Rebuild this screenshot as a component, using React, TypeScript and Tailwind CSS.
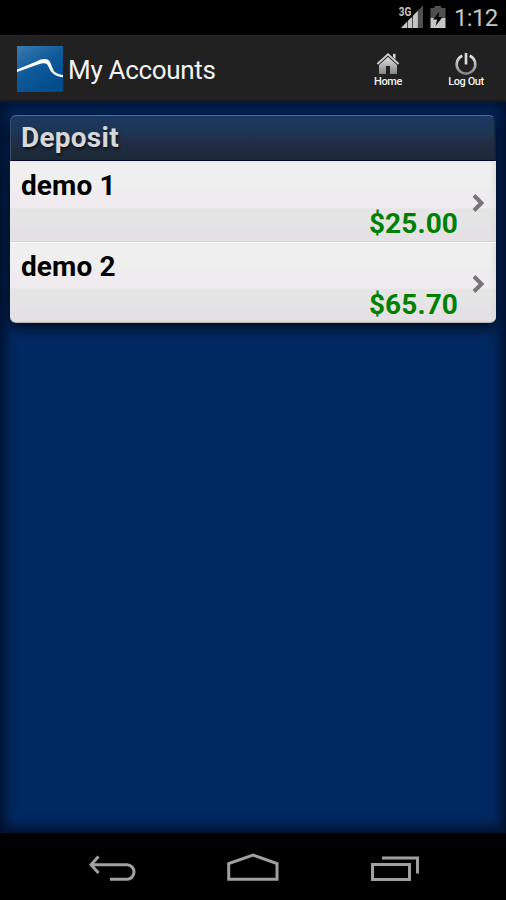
import type { ReactNode } from 'react';

interface Account {
  name: string;
  balance: string;
}

const accounts: Account[] = [
  { name: 'demo 1', balance: '$25.00' },
  { name: 'demo 2', balance: '$65.70' },
];

function StatusBar() {
  return (
    <div className="h-[35px] shrink-0 bg-black flex items-start justify-end pr-[9px]">
      <svg width="26" height="35" viewBox="0 0 26 35" className="mr-[6px]">
        <path d="M25 5.5V28H3z" fill="#505050" />
        <path d="M19.8 10.8V28H3z" fill="#c6c6c6" />
        <path d="M9.5 6V28M14.5 6V28" stroke="#000" strokeWidth="0.6" />
        <rect x="0" y="5" width="14.3" height="12.5" fill="#000" />
        <text x="0.7" y="16" fontFamily="Roboto" fontWeight="700" fontSize="12.8" fill="#c6c6c6" textLength="12.6" lengthAdjust="spacingAndGlyphs">
          3G
        </text>
      </svg>
      <svg width="16" height="35" viewBox="0 0 16 35" className="mr-[8px]">
        <path d="M4.5 6h6.5v2H15.5v10H.5V8h4z" fill="#505050" />
        <path d="M.5 18h15v10H.5z" fill="#c6c6c6" />
        <path d="M9.5 11.5L3 19.5h4.2L5.5 26 12.5 17H8.3z" fill="#000" />
      </svg>
      <span className="w-[43px] text-[24px] leading-[36px] tracking-[-0.7px] text-[#c6c6c6] whitespace-nowrap">1:12</span>
    </div>
  );
}

function Logo() {
  return (
    <svg width="46" height="46" viewBox="0 0 46 46" className="shrink-0 mt-[2px]">
      <defs>
        <linearGradient id="logoBg" x1="0" y1="0" x2="0.6" y2="1">
          <stop offset="0" stopColor="#3a7cb0" />
          <stop offset="0.5" stopColor="#0f5b9c" />
          <stop offset="1" stopColor="#004d8e" />
        </linearGradient>
      </defs>
      <rect width="46" height="46" fill="url(#logoBg)" />
      <path
        d="M0 23.4L20 15.2C25 12.7 30.5 12 32.7 15.5C35 19 35.5 24.5 38.5 26.6C41 28.3 43.5 28.8 46 29V31.2C42 31 38.2 29.7 35.5 27C32.2 24 31.5 19.5 29.5 17.8C28 16.7 25 17.2 21 18.5L0 26z"
        fill="#fff"
      />
    </svg>
  );
}

function ActionButton({ label, children }: { label: string; children: ReactNode }) {
  return (
    <button className="w-[78px] h-full flex flex-col items-center pt-[16px]">
      {children}
      <span className="mt-px text-[11px] leading-[12px] tracking-[-0.4px] font-medium text-[#f0f0f0] whitespace-nowrap">{label}</span>
    </button>
  );
}

function AppBar() {
  return (
    <header className="h-[67px] shrink-0 bg-[#212121] border-t border-[#262626] border-b-2 border-b-[#191919] flex items-center pl-[17px]">
      <Logo />
      <h1 className="ml-[5px] flex-1 text-[26px] leading-[30px] tracking-[-0.32px] pt-[4px] text-[#f3f3f3] whitespace-nowrap">My Accounts</h1>
      <ActionButton label="Home">
        <svg width="24" height="23" viewBox="0 0 24 23">
          <defs>
            <linearGradient id="metal" x1="0" y1="0" x2="0" y2="1">
              <stop offset="0" stopColor="#e2e2e2" />
              <stop offset="1" stopColor="#858585" />
            </linearGradient>
          </defs>
          <path d="M12 4.4L21 12V22H14V14H10V22H3V12z" fill="url(#metal)" />
          <path d="M17 1.8h2.5v5.6L17 5z" fill="#d8d8d8" />
          <path d="M1.4 12.4L12 2.8L22.6 12.4" fill="none" stroke="#212121" strokeWidth="3.2" />
          <path d="M1.4 12L12 2.2L22.6 12" fill="none" stroke="#cfcfcf" strokeWidth="1.9" />
        </svg>
      </ActionButton>
      <ActionButton label="Log Out">
        <svg width="24" height="23" viewBox="0 0 24 23">
          <path d="M8.3 3.8A9.3 9.3 0 1 0 15.7 3.8" fill="none" stroke="url(#metal)" strokeWidth="2.6" />
          <path d="M12 1v11.5" stroke="#212121" strokeWidth="4.6" />
          <path d="M12 1v11.5" stroke="#dcdcdc" strokeWidth="2.6" />
        </svg>
      </ActionButton>
      <div className="w-px" />
    </header>
  );
}

function AccountRow({ name, balance }: Account) {
  return (
    <li className="h-[81px] last:h-[80px] flex items-start pt-[5px] bg-[linear-gradient(#f0f0f0,#eeeeee_32%,#efebee_36%,#efebee_57%,#e5e5e5_59%,#e5e5e5_80%,#e5e1e5_83%,#e4e0e4)] border-t border-[#fafafa] first:border-[#e8e8e8] shadow-[inset_0_-1px_0_#d5d5d5,inset_-5px_0_6px_-4px_#d8d8d8]">
      <div className="flex-1 pl-[11px]">
        <p className="h-[37px] text-[28px] leading-[37px] tracking-[0.1px] font-bold text-black">{name}</p>
        <p className="h-[38px] text-[28px] leading-[40px] tracking-[0.1px] font-bold text-[#008000] text-right">{balance}</p>
      </div>
      <svg width="38" height="20" viewBox="0 0 38 20" className="mt-[26px]">
        <path d="M16 2.5L23.5 10L16 17.5" fill="none" stroke="#777" strokeWidth="4" />
      </svg>
    </li>
  );
}

function NavBar() {
  return (
    <nav className="h-[67px] shrink-0 bg-black">
      <svg width="506" height="67" viewBox="0 0 506 67" fill="none" stroke="#a0a0a0" strokeWidth="3">
        <path d="M110 46.2h17a7 7.2 0 0 0 0-14.4H90.5M98.5 23.5l-7.5 8.3l7.5 8.2" />
        <path d="M228.7 46.2V30.5L253 22L277 30.5V46.2z" />
        <path d="M372.5 31.5h37v15h-37zM382 25h35.5v15.5" />
      </svg>
    </nav>
  );
}

export default function App() {
  return (
    <div className="w-[506px] h-[900px] flex flex-col overflow-hidden bg-black font-['Roboto',sans-serif]">
      <StatusBar />
      <AppBar />
      <main className="h-[731px] bg-[#002961] px-[10px] pt-[13px] shadow-[inset_0_-1px_12px_5px_#00102c]">
        <section className="w-[486px] rounded-[6px] shadow-[0_4px_14px_rgba(0,0,0,0.8)]">
          <h2 className="h-[46px] w-[485px] rounded-t-[6px] border border-b-[#080d28] border-t-[#526b88] border-l-[#394e68] border-r-[#14273d] bg-[linear-gradient(#1c3861,#1b3551_46%,#232f4b_48%,#1b2934)] pl-[10px] text-[28px] leading-[43px] tracking-[0.25px] font-bold text-[#d7d7d7] [text-shadow:1px_2px_3px_#000a]">
            Deposit
          </h2>
          <ul className="rounded-b-[6px] overflow-hidden border-b border-[#bbb]">
            {accounts.map((account) => (
              <AccountRow key={account.name} {...account} />
            ))}
          </ul>
        </section>
      </main>
      <NavBar />
    </div>
  );
}
